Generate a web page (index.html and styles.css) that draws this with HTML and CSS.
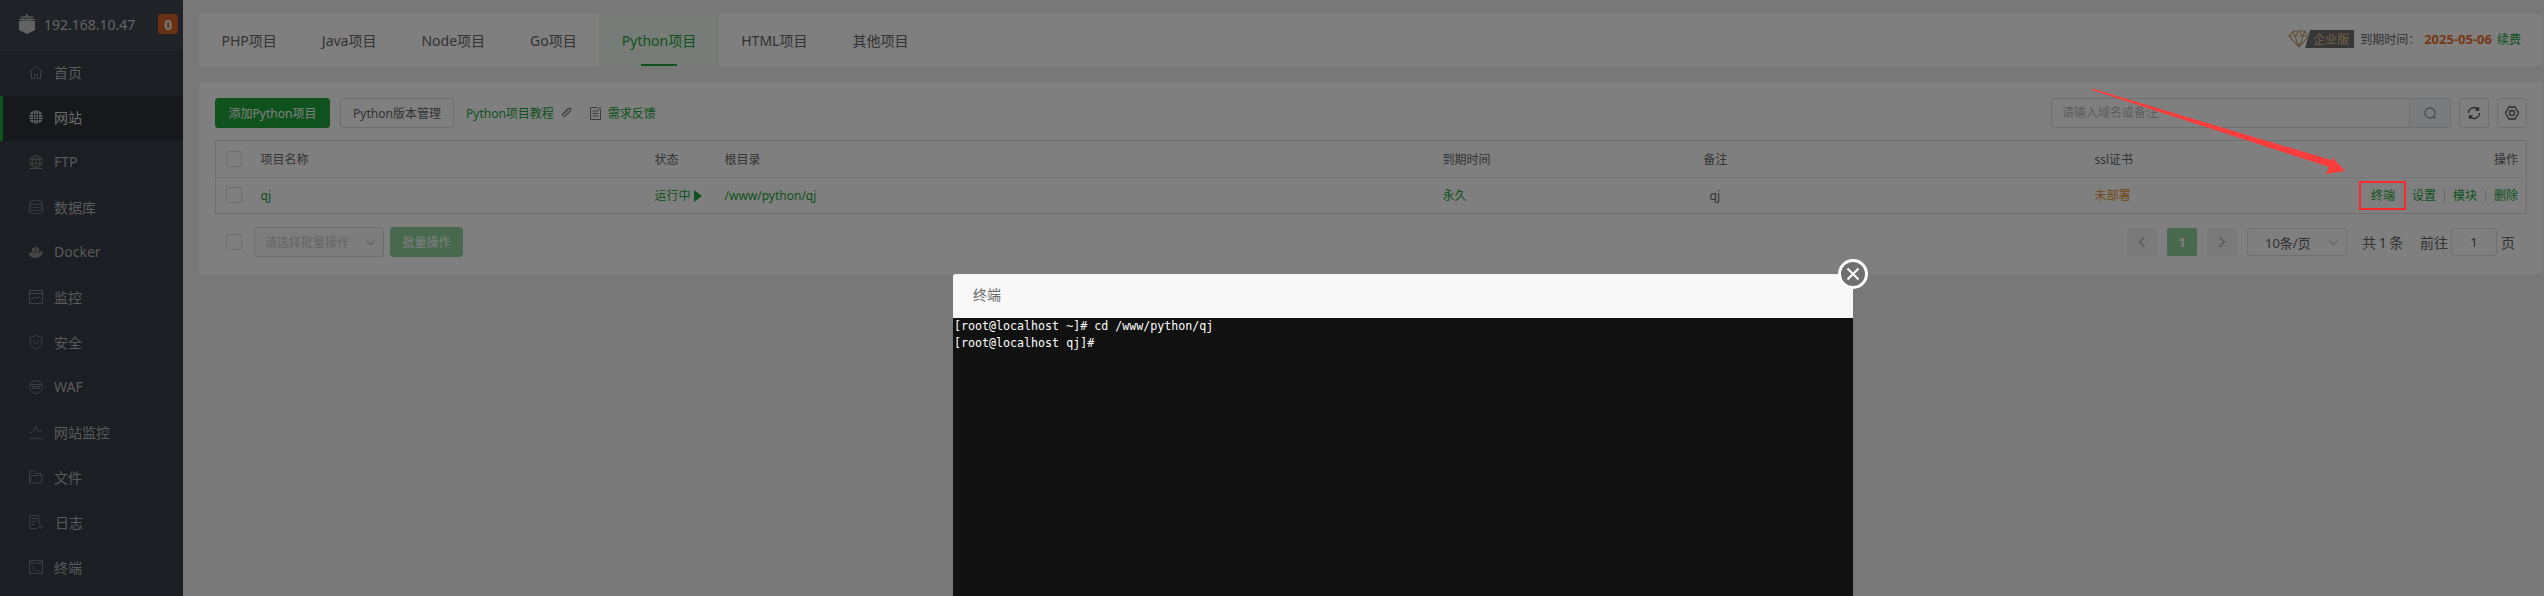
FILE: index.html
```html
<!DOCTYPE html>
<html lang="zh-CN">
<head>
<meta charset="utf-8">
<title>Python项目</title>
<link rel="stylesheet" href="styles.css">
</head>
<body>
<div class="app">
  <aside class="side">
    <div class="brand">
      <svg class="logo" viewBox="0 0 20 20"><path class="fill" d="M2 7.500 L5 6.500h10l3 1V16l-8 4-8-4z"/><path class="line" d="M3.500 3h13M1.500 5.500h17M10 0v6M5 5.500l5-4.500 5 4.500"/></svg>
      <span class="ip">192.168.10.47</span>
      <span class="count">0</span>
    </div>
    <nav class="menu">
      <a class="item"><svg class="ico" viewBox="0 0 14 14"><path d="M.5 7 7 .8 13.500 7M2.500 6v7.500h3v-4h3v4h3V6"/></svg><span>首页</span></a>
      <a class="item on"><svg class="ico solid" viewBox="0 0 14 14"><circle cx="7" cy="7" r="6.800"/><path class="grid" d="M0 4.500h14M0 7h14M0 9.500h14M4.500 0v14M7 0v14M9.500 0v14"/></svg><span>网站</span></a>
      <a class="item"><svg class="ico" viewBox="0 0 14 14"><circle cx="7" cy="6.500" r="6"/><path d="M1 4.500h12M1 8.500h12M7 .5v12M4 1.500q-1 5 0 10M10 1.500q1 5 0 10M0 13.500h14"/></svg><span>FTP</span></a>
      <a class="item"><svg class="ico" viewBox="0 0 14 14"><ellipse cx="7" cy="2.500" rx="6.500" ry="2"/><path d="M.5 2.500v9c0 1.100 3 2 6.500 2s6.500-.9 6.500-2v-9M.5 5.500c0 1.100 3 2 6.500 2s6.500-.9 6.500-2M.5 8.500c0 1.100 3 2 6.500 2s6.500-.9 6.500-2"/></svg><span>数据库</span></a>
      <a class="item"><svg class="ico solid" viewBox="0 0 14 14"><path class="mute" d="M0 7.500h10.500c.5-1 1.500-1.500 3.500-1-.5 3.500-3 6.500-7.500 6.500C2.500 13 0 11 0 7.500zM3 3h2v4H3zM5.500 1.500h2V7h-2zM8 3h2v4H8z"/></svg><span>Docker</span></a>
      <a class="item"><svg class="ico" viewBox="0 0 14 14"><path d="M.5.5h13v13H.5zM.5 3.500h13M2.500 10l2.500-3 2.500 2 2-2.500 2 2"/></svg><span>监控</span></a>
      <a class="item"><svg class="ico" viewBox="0 0 14 14"><path d="M7 .5 13 2.500v5c0 3-2.500 5-6 6.200-3.500-1.200-6-3.200-6-6.200v-5zM4.500 7l2 2 3.200-3.500"/></svg><span>安全</span></a>
      <a class="item"><svg class="ico" viewBox="0 0 14 14"><path d="M7 .5 13 2.500v5c0 3-2.500 5-6 6.200-3.500-1.200-6-3.200-6-6.200v-5zM1 4.500h12M3.500 6.500h7v2h-7z"/></svg><span>WAF</span></a>
      <a class="item"><svg class="ico" viewBox="0 0 14 14"><path d="M.5 8h2.500l2-3 2-4 2 5h4M0 13.300h14"/></svg><span>网站监控</span></a>
      <a class="item"><svg class="ico" viewBox="0 0 14 14"><path d="M.5 13V1h4.500l1.500 2.500h5.500v2M.5 13h12l1-7.500H2.500L.5 13"/></svg><span>文件</span></a>
      <a class="item"><svg class="ico" viewBox="0 0 14 14"><path d="M10 9V.5H1v13h7M3 3.500h5M3 6.500h5M3 9.500h3"/><circle cx="11.500" cy="11.500" r="1.500"/></svg><span class="logs">日志</span></a>
      <a class="item"><svg class="ico" viewBox="0 0 14 14"><path d="M.5.5h13v13H.5zM.5 3h13M3 6l2.500 2L3 10M6.500 11h4"/></svg><span>终端</span></a>
    </nav>
  </aside>

  <main class="main">
    <header class="topbar">
      <nav class="tabs">
        <a class="tab">PHP项目</a>
        <a class="tab">Java项目</a>
        <a class="tab">Node项目</a>
        <a class="tab">Go项目</a>
        <a class="tab active">Python项目</a>
        <a class="tab">HTML项目</a>
        <a class="tab">其他项目</a>
      </nav>
      <div class="license">
        <svg class="gem" viewBox="0 0 22 18"><path d="M5 1h12l4 5-10 11L1 6zM1 6h20M7 6l4 11 4-11M5 1l2 5 4-5 4 5 2-5"/></svg>
        <span class="tier">企业版</span>
        <span class="expire">到期时间：</span>
        <b class="date">2025-05-06</b>
        <a class="renew">续费</a>
      </div>
    </header>

    <section class="panel">
      <div class="toolbar">
        <button class="btn primary">添加Python项目</button>
        <button class="btn">Python版本管理</button>
        <a class="link tut">Python项目教程
          <svg class="mini" viewBox="0 0 12 12"><path d="M8 1.500 2.500 7a1.500 1.500 0 0 0 2 2L10 3.500a1 1 0 0 0-2-1.500L3 7M1.500 10"/></svg>
        </a>
        <a class="link fb">
          <svg class="mini" viewBox="0 0 12 14"><path d="M8 1.500H1V13.500H11V3M3 5h6M3 7.500h6M3 10h6M8 5l3-4.500"/></svg>
          需求反馈
        </a>
        <div class="tools">
          <div class="search">
            <span class="ph">请输入域名或备注</span>
            <span class="sbtn"><svg viewBox="0 0 14 14"><circle cx="6.500" cy="6.500" r="5.500"/><path d="M10.500 10.500l2 2"/></svg></span>
          </div>
          <button class="sq"><svg viewBox="0 0 14 14"><path d="M1.500 7a5.500 5.500 0 0 1 9.500-3.700M12.500 7A5.500 5.500 0 0 1 3 10.700M11.500 1v3h-3M2.500 13v-3h3"/></svg></button>
          <button class="sq"><svg viewBox="0 0 14 14"><path d="M4 1h6l3.500 6-3.500 6H4L.5 7z"/><circle cx="7" cy="7" r="2.500"/></svg></button>
        </div>
      </div>

      <table class="tbl">
        <colgroup><col class="c0"><col class="c1"><col class="c2"><col class="c3"><col class="c4"><col class="c5"><col class="c6"><col></colgroup>
        <thead>
          <tr><th><i class="cb"></i></th><th>项目名称</th><th>状态</th><th>根目录</th><th>到期时间</th><th>备注</th><th>ssl证书</th><th class="r">操作</th></tr>
        </thead>
        <tbody>
          <tr>
            <td><i class="cb"></i></td>
            <td class="g">qj</td>
            <td class="g">运行中<span class="play"></span></td>
            <td class="g">/www/python/qj</td>
            <td class="g">永久</td>
            <td class="note">qj</td>
            <td class="warn">未部署</td>
            <td class="r ops"><a>终端</a><a>设置</a><s></s><a>模块</a><s></s><a>删除</a></td>
          </tr>
        </tbody>
      </table>

      <div class="foot">
        <i class="cb"></i>
        <div class="bulk"><span>请选择批量操作</span><svg class="chev" viewBox="0 0 12 8"><path d="M1 1.500l5 5 5-5"/></svg></div>
        <button class="btn apply">批量操作</button>
        <div class="pager">
          <span class="pg off"><svg viewBox="0 0 8 12"><path d="M6.500 1 1.500 6l5 5"/></svg></span>
          <span class="pg cur">1</span>
          <span class="pg off"><svg viewBox="0 0 8 12"><path d="M1.500 1l5 5-5 5"/></svg></span>
          <div class="size"><span>10条/页</span><svg class="chev" viewBox="0 0 12 8"><path d="M1 1.500l5 5 5-5"/></svg></div>
          <span class="total">共 1 条</span>
          <span class="goto">前往</span>
          <span class="pinput">1</span>
          <span class="unit">页</span>
        </div>
      </div>
    </section>
  </main>
</div>

<div class="mask"></div>

<svg class="arrow" viewBox="0 0 2544 596"><polygon points="2092,88.500 2331,160 2333,158 2345,171 2326,174 2329,167 2092,90"/></svg>
<div class="redbox"></div>

<section class="modal">
  <div class="mhead">终端</div>
  <pre class="term">[root@localhost ~]# cd /www/python/qj
[root@localhost qj]#</pre>
  <button class="close"><svg viewBox="0 0 14 14"><path d="M1.500 1.500l11 11M12.500 1.500l-11 11"/></svg></button>
</section>
</body>
</html>
```

FILE: styles.css
```css
* { box-sizing: border-box; }
html, body { margin: 0; height: 100%; overflow: hidden; }
body {
  font-family: "Noto Sans", "Noto Sans CJK SC", "Liberation Sans", sans-serif;
  font-size: 12px;
  color: #666;
  background: #f0f0f0;
}
a { text-decoration: none; }
button { font: inherit; }

.app { display: flex; height: 596px; overflow: hidden; }

/* sidebar */
.side { width: 183px; flex: none; background: #363c47; color: #b4b4b4; }
.brand { height: 51px; display: flex; align-items: center; padding: 0 0 3px 17px; background: #3e444f; }
.logo { width: 20px; height: 20px; }
.logo .fill { fill: #c4c4c4; }
.logo .line { fill: none; stroke: #c4c4c4; stroke-width: 1; }
.ip { margin-left: 7px; font-size: 14px; color: #c8c8c8; }
.count {
  margin-left: 23px; width: 20px; height: 20px; border-radius: 3px;
  background: #d0602a; color: #eee; font-weight: 700; font-size: 14px;
  display: flex; align-items: center; justify-content: center;
}
.menu { display: flex; flex-direction: column; }
.item { height: 45px; display: flex; align-items: center; gap: 11px; padding: 0 0 4px 29px; font-size: 14px; color: #b4b4b4; }
.item.on { background: #2c3037; border-left: 3px solid #20a53a; padding-left: 26px; color: #d8d8d8; }
.ico { width: 14px; height: 14px; fill: none; stroke: #7c7c7c; stroke-width: 1; }
.ico.solid { stroke: none; fill: #c8c8c8; }
.ico .grid { stroke: #2c3037; stroke-width: .8; fill: none; }
.ico .mute { fill: #8e8e8e; }
.logs { margin-left: 1px; }

/* main */
.main { flex: 1; min-width: 0; padding: 14px 1px 0 16px; display: flex; flex-direction: column; gap: 16px; }
.topbar { height: 52px; background: #fff; border-radius: 3px; display: flex; align-items: stretch; justify-content: space-between; padding-right: 22px; }
.tabs { display: flex; }
.tab { padding: 0 22.500px; font-size: 14px; color: #666; display: flex; align-items: center; position: relative; }
.tab.active { color: #20a53a; background: #f0f9f2; }
.tab.active::after { content: ""; position: absolute; left: 50%; bottom: 0; width: 36px; height: 2px; margin-left: -18px; background: #20a53a; }
.license { display: flex; align-items: center; padding-bottom: 2px; isolation: isolate; }
.gem { width: 22px; height: 18px; fill: none; stroke: #c2a77a; stroke-width: 1.200; position: relative; z-index: 1; }
.tier { margin-left: -5px; height: 18px; padding: 0 5px 0 8px; background: #6e6e6e; color: #e6c48e; display: flex; align-items: center; clip-path: polygon(5px 0, 100% 0, 100% 100%, 0 100%); }
.expire { margin-left: 6px; width: 64px; color: #666; font-size: 12px; }
.date { color: #ef6c27; font-size: 13px; }
.renew { margin-left: 5px; color: #20a53a; }

.panel { height: 192px; background: #fff; padding: 16px; border-radius: 3px; }
.toolbar { display: flex; align-items: center; height: 30px; }
.btn { height: 30px; padding: 0 12px; border: 1px solid #ddd; border-radius: 3px; background: #fff; color: #666; font-size: 12px; }
.btn.primary { background: #20a53a; border-color: #20a53a; color: #fff; width: 115px; padding: 0; }
.toolbar .btn + .btn { margin-left: 10px; width: 114px; padding: 0; }
.link { color: #20a53a; display: flex; align-items: center; gap: 6px; }
.tut { margin-left: 12px; }
.fb { margin-left: 16px; }
.mini { width: 13px; height: 14px; fill: none; stroke: #777; stroke-width: 1; }
.tools { margin-left: auto; display: flex; gap: 8px; }
.search { width: 400px; height: 30px; border: 1px solid #ddd; border-radius: 3px; display: flex; overflow: hidden; }
.ph { flex: 1; padding-left: 10px; line-height: 28px; color: #bbb; font-size: 12px; }
.sbtn { width: 41px; background: #f5f7fa; border-left: 1px solid #ddd; display: flex; align-items: center; justify-content: center; }
.sbtn svg { width: 13px; height: 13px; fill: none; stroke: #888; stroke-width: 1.200; }
.sq { width: 30px; height: 30px; border: 1px solid #ddd; border-radius: 3px; background: #fff; padding: 0; display: flex; align-items: center; justify-content: center; }
.sq svg { width: 14px; height: 14px; fill: none; stroke: #555; stroke-width: 1.300; }

.tbl { width: 2312px; margin-top: 12px; table-layout: fixed; border-collapse: collapse; border: 1px solid #ddd; }
.c0 { width: 35px; } .c1 { width: 394px; } .c2 { width: 70px; } .c3 { width: 718px; }
.c4 { width: 261px; } .c5 { width: 391px; } .c6 { width: 216px; }
.tbl th, .tbl td { padding: 0 10px; text-align: left; font-weight: 400; font-size: 12px; height: 36.500px; color: #666; }
.tbl th { border-bottom: 1px solid #eee; }
.tbl th:first-child, .tbl td:first-child { padding-left: 10px; }
.tbl .r { text-align: right; padding-right: 8px; }
.tbl .g { color: #20a53a; }
.tbl .note { padding-left: 16px; }
.tbl .warn { color: #e8922a; }
.cb { display: block; width: 16px; height: 16px; border: 1px solid #ddd; border-radius: 2px; background: #fff; }
.play { display: inline-block; margin-left: 3px; border-left: 8px solid #20a53a; border-top: 6px solid transparent; border-bottom: 6px solid transparent; vertical-align: -2px; }
.ops { white-space: nowrap; }
.ops a { color: #20a53a; }
.ops a:first-child { margin-right: 17px; }
.ops s { display: inline-block; width: 1px; height: 12px; margin: 0 8px; background: #ccc; vertical-align: -2px; }

.foot { display: flex; align-items: center; margin-top: 13px; height: 30px; padding-left: 11px; }
.bulk { width: 130px; height: 30px; margin-left: 12px; border: 1px solid #ddd; border-radius: 3px; display: flex; align-items: center; justify-content: space-between; padding: 0 7px 0 10px; color: #ccc; background: #fafafa; }
.chev { width: 11px; height: 7px; fill: none; stroke: #c0c4cc; stroke-width: 1.200; }
.btn.apply { margin-left: 6px; width: 73px; padding: 0; background: #90d29d; border-color: #90d29d; color: #fff; }
.pager { margin-left: auto; display: flex; align-items: center; height: 28px; padding-right: 12px; font-size: 14px; color: #606266; }
.pg { width: 30px; height: 28px; margin-right: 10px; border-radius: 2px; background: #f4f4f5; font-weight: 700; display: flex; align-items: center; justify-content: center; }
.pg svg { width: 8px; height: 12px; fill: none; stroke: #c0c4cc; stroke-width: 1.800; }
.pg.cur { background: #90d29d; color: #fff; font-size: 13px; }
.size { width: 100px; height: 28px; border: 1px solid #dcdfe6; border-radius: 3px; display: flex; align-items: center; justify-content: space-between; padding: 0 7px 0 17px; font-size: 13px; }
.total { margin-left: 15px; width: 41px; white-space: nowrap; font-size: 14px; word-spacing: -1px; }
.goto { margin-left: 17px; font-size: 14px; }
.pinput { width: 46px; height: 28px; margin-left: 3px; border: 1px solid #dcdfe6; border-radius: 3px; text-align: center; line-height: 26px; font-size: 13px; }
.unit { margin-left: 4px; font-size: 14px; }

/* overlays */
.mask { position: absolute; inset: 0; background: rgba(0, 0, 0, .5); }
.arrow { position: absolute; inset: 0; width: 2544px; height: 596px; pointer-events: none; }
.arrow polygon { fill: #fa3c3c; }
.redbox { position: absolute; left: 2359px; top: 181px; width: 47px; height: 29px; border: 2px solid #fa2a2a; }
.modal { position: absolute; left: 953px; top: 274px; width: 900px; height: 322px; background: #111; border-radius: 2px 0 0 0; }
.mhead { height: 44px; padding-left: 20px; background: #f8f8f8; color: #666; font-size: 14px; line-height: 42px; border-radius: 2px 0 0 0; }
.term { margin: 0; padding: 0 1px; color: #fff; font-family: "DejaVu Sans Mono", "Liberation Mono", monospace; font-size: 11.650px; line-height: 17px; }
.close {
  position: absolute; right: -15px; top: -15px; width: 30px; height: 30px; padding: 0;
  border: 3px solid #fff; border-radius: 50%; background: #6f6f6f;
  display: flex; align-items: center; justify-content: center;
}
.close svg { width: 14px; height: 14px; fill: none; stroke: #fff; stroke-width: 2; }
```
